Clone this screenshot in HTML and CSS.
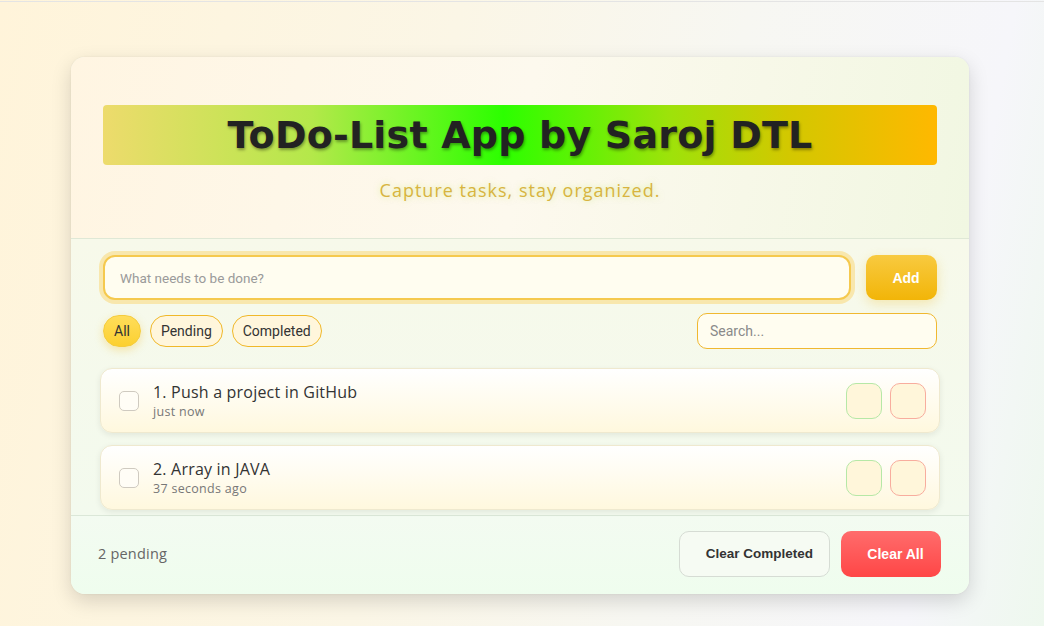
FILE: index.html
```html
<!DOCTYPE html>
<html lang="en">
<head>
<meta charset="utf-8">
<title>ToDo-List App</title>
<link rel="stylesheet" href="styles.css">
</head>
<body>
<main class="card">
  <header class="head">
    <h1 class="title">ToDo-List App by Saroj DTL</h1>
    <p class="subtitle">Capture tasks, stay organized.</p>
  </header>
  <section class="body">
    <div class="add-row">
      <input class="task-input" type="text" placeholder="What needs to be done?">
      <button class="btn-add">Add</button>
    </div>
    <div class="filter-row">
      <div class="filters">
        <button class="pill active">All</button>
        <button class="pill">Pending</button>
        <button class="pill">Completed</button>
      </div>
      <input class="search" type="text" placeholder="Search...">
    </div>
    <ul class="list">
      <li class="item">
        <span class="check"></span>
        <div class="item-text">
          <div class="item-title">1. Push a project in GitHub</div>
          <div class="item-time">just now</div>
        </div>
        <div class="actions">
          <button class="act edit"></button>
          <button class="act del"></button>
        </div>
      </li>
      <li class="item">
        <span class="check"></span>
        <div class="item-text">
          <div class="item-title">2. Array in JAVA</div>
          <div class="item-time">37 seconds ago</div>
        </div>
        <div class="actions">
          <button class="act edit"></button>
          <button class="act del"></button>
        </div>
      </li>
    </ul>
  </section>
  <footer class="foot">
    <span class="count">2 pending</span>
    <div class="foot-btns">
      <button class="btn-clear-done">Clear Completed</button>
      <button class="btn-clear-all">Clear All</button>
    </div>
  </footer>
</main>
</body>
</html>
```
FILE: styles.css
```css
* { box-sizing: border-box; }
html, body { margin: 0; height: 100%; }
body {
  border-top: 1px solid #e4e4e4;
  margin-top: 1px;
  background: linear-gradient(100deg, #fff4da 0%, #fbf6e6 40%, #f7f7f2 65%, #f6f6fa 88%, #eef8ee 100%);
  font-family: "Liberation Sans", Arial, sans-serif;
  padding: 55px 20px 0;
}
.card {
  width: 898px;
  margin: 0 auto 0 51px;
  border-radius: 14px;
  overflow: hidden;
  background: #f7fbee;
  box-shadow: 0 7px 20px rgba(0,0,0,0.15), 0 0 2px rgba(0,0,0,0.08);
}
.head {
  background: linear-gradient(100deg, #fff5e2 0%, #fdf9ee 50%, #f1f7e2 100%);
  padding: 48px 32px 36px;
  border-bottom: 1px solid #dfe8d6;
  text-align: center;
}
.title {
  margin: 0;
  height: 60px;
  line-height: 60px;
  border-radius: 4px;
  background: linear-gradient(90deg, #eddb6c 0%, #b4e84a 25%, #2cff00 48%, #9ee20a 68%, #d2c800 82%, #ffb800 100%);
  font-family: "DejaVu Sans", sans-serif;
  font-weight: 700;
  font-size: 38px;
  letter-spacing: 0.2px;
  color: #222;
  text-shadow: 1px 2px 3px rgba(0,0,0,0.35);
}
.subtitle {
  margin: 13px 0 0;
  font-family: "Open Sans", sans-serif;
  font-size: 18px;
  letter-spacing: 1px;
  color: #d8b440;
  text-shadow: 0 0 6px rgba(190,230,90,0.55);
  line-height: 24px;
}
.body {
  padding: 16px 29px 0 29px;
  background: linear-gradient(180deg, #f7f9ea 0%, #f3faee 100%);
}
.add-row {
  display: flex;
  gap: 15px;
  padding: 0 3px;
}
.task-input {
  flex: 1;
  height: 45px;
  border: 2px solid #f5c94e;
  border-radius: 12px;
  background: #fffdf0;
  box-shadow: 0 0 0 4px #f8e7ad;
  padding: 0 15px;
  font: 13.5px Roboto, "Liberation Sans", Arial, sans-serif;
  outline: none;
}
.task-input::placeholder { color: #9a9a9a; }
.btn-add {
  width: 71px;
  height: 45px;
  border: none;
  border-radius: 10px;
  background: linear-gradient(180deg, #f8ca40 0%, #f2b508 100%);
  color: #fff;
  font: 700 14px "Liberation Sans", Arial, sans-serif;
  padding: 0 17px 0 26px;
  box-shadow: 0 4px 12px rgba(240,190,40,0.3);
}
.filter-row {
  display: flex;
  justify-content: space-between;
  align-items: center;
  margin-top: 13px;
  padding: 0 3px;
}
.filters { display: flex; gap: 9px; }
.pill {
  height: 32px;
  padding: 0 10px;
  border: 1px solid #f0b82a;
  border-radius: 16px;
  background: #fff6dc;
  color: #333;
  font: 14px Roboto, "Liberation Sans", Arial, sans-serif;
}
.pill.active {
  background: linear-gradient(180deg, #ffdd5a 0%, #fcd030 100%);
  border-color: #f5cc3c;
  box-shadow: 0 3px 8px rgba(240,190,40,0.35);
}
.search {
  width: 240px;
  height: 36px;
  border: 1px solid #f0b830;
  border-radius: 10px;
  background: #fffdf0;
  padding: 0 12px;
  font: 14px Roboto, "Liberation Sans", Arial, sans-serif;
  outline: none;
}
.search::placeholder { color: #8a8a8a; }
.list {
  list-style: none;
  margin: 0;
  padding: 19px 0 5px;
  display: flex;
  flex-direction: column;
  gap: 12px;
}
.item {
  display: flex;
  align-items: center;
  height: 65px;
  padding: 0 13px 0 18px;
  border: 1px solid #efe9cf;
  border-radius: 12px;
  background: linear-gradient(180deg, #ffffff 0%, #fff8de 100%);
  box-shadow: 0 2px 6px rgba(0,0,0,0.08);
}
.check {
  width: 20px;
  height: 20px;
  border: 1.5px solid #cfcac0;
  border-radius: 5px;
  background: #fffdf6;
  flex: none;
}
.item-text { flex: 1; margin-left: 14px; }
.item-title {
  font-family: "Open Sans", sans-serif;
  font-size: 16px;
  letter-spacing: 0.2px;
  color: #333;
  line-height: 22px;
}
.item-time {
  font-family: "Open Sans", sans-serif;
  font-size: 12.5px;
  letter-spacing: 0.3px;
  color: #777;
  line-height: 17px;
}
.actions { display: flex; gap: 8px; }
.act {
  width: 36px;
  height: 36px;
  border-radius: 10px;
  background: #fff6da;
  padding: 0;
}
.act.edit { border: 1.5px solid #b6e8a6; }
.act.del { border: 1.5px solid #f8ad9e; }
.foot {
  display: flex;
  justify-content: space-between;
  align-items: center;
  height: 79px;
  padding: 0 28px 3px 27px;
  border-top: 1px solid #dbe7d8;
  background: linear-gradient(180deg, #f3fbf1 0%, #effdee 100%);
}
.count {
  font-family: "Open Sans", sans-serif;
  font-size: 14.5px;
  letter-spacing: 0.2px;
  color: #666;
}
.foot-btns { display: flex; gap: 11px; }
.btn-clear-done {
  height: 46px;
  padding: 0 16px 0 26px;
  border: 1px solid #d6dcd4;
  border-radius: 10px;
  background: #f6fbf3;
  color: #333;
  font: 700 13.5px "Liberation Sans", Arial, sans-serif;
}
.btn-clear-all {
  height: 46px;
  width: 100px;
  padding: 0 17px 0 26px;
  border: none;
  border-radius: 10px;
  background: linear-gradient(180deg, #ff6c6c 0%, #ff4646 100%);
  color: #fff;
  font: 700 14px "Liberation Sans", Arial, sans-serif;
  white-space: nowrap;
}
```
